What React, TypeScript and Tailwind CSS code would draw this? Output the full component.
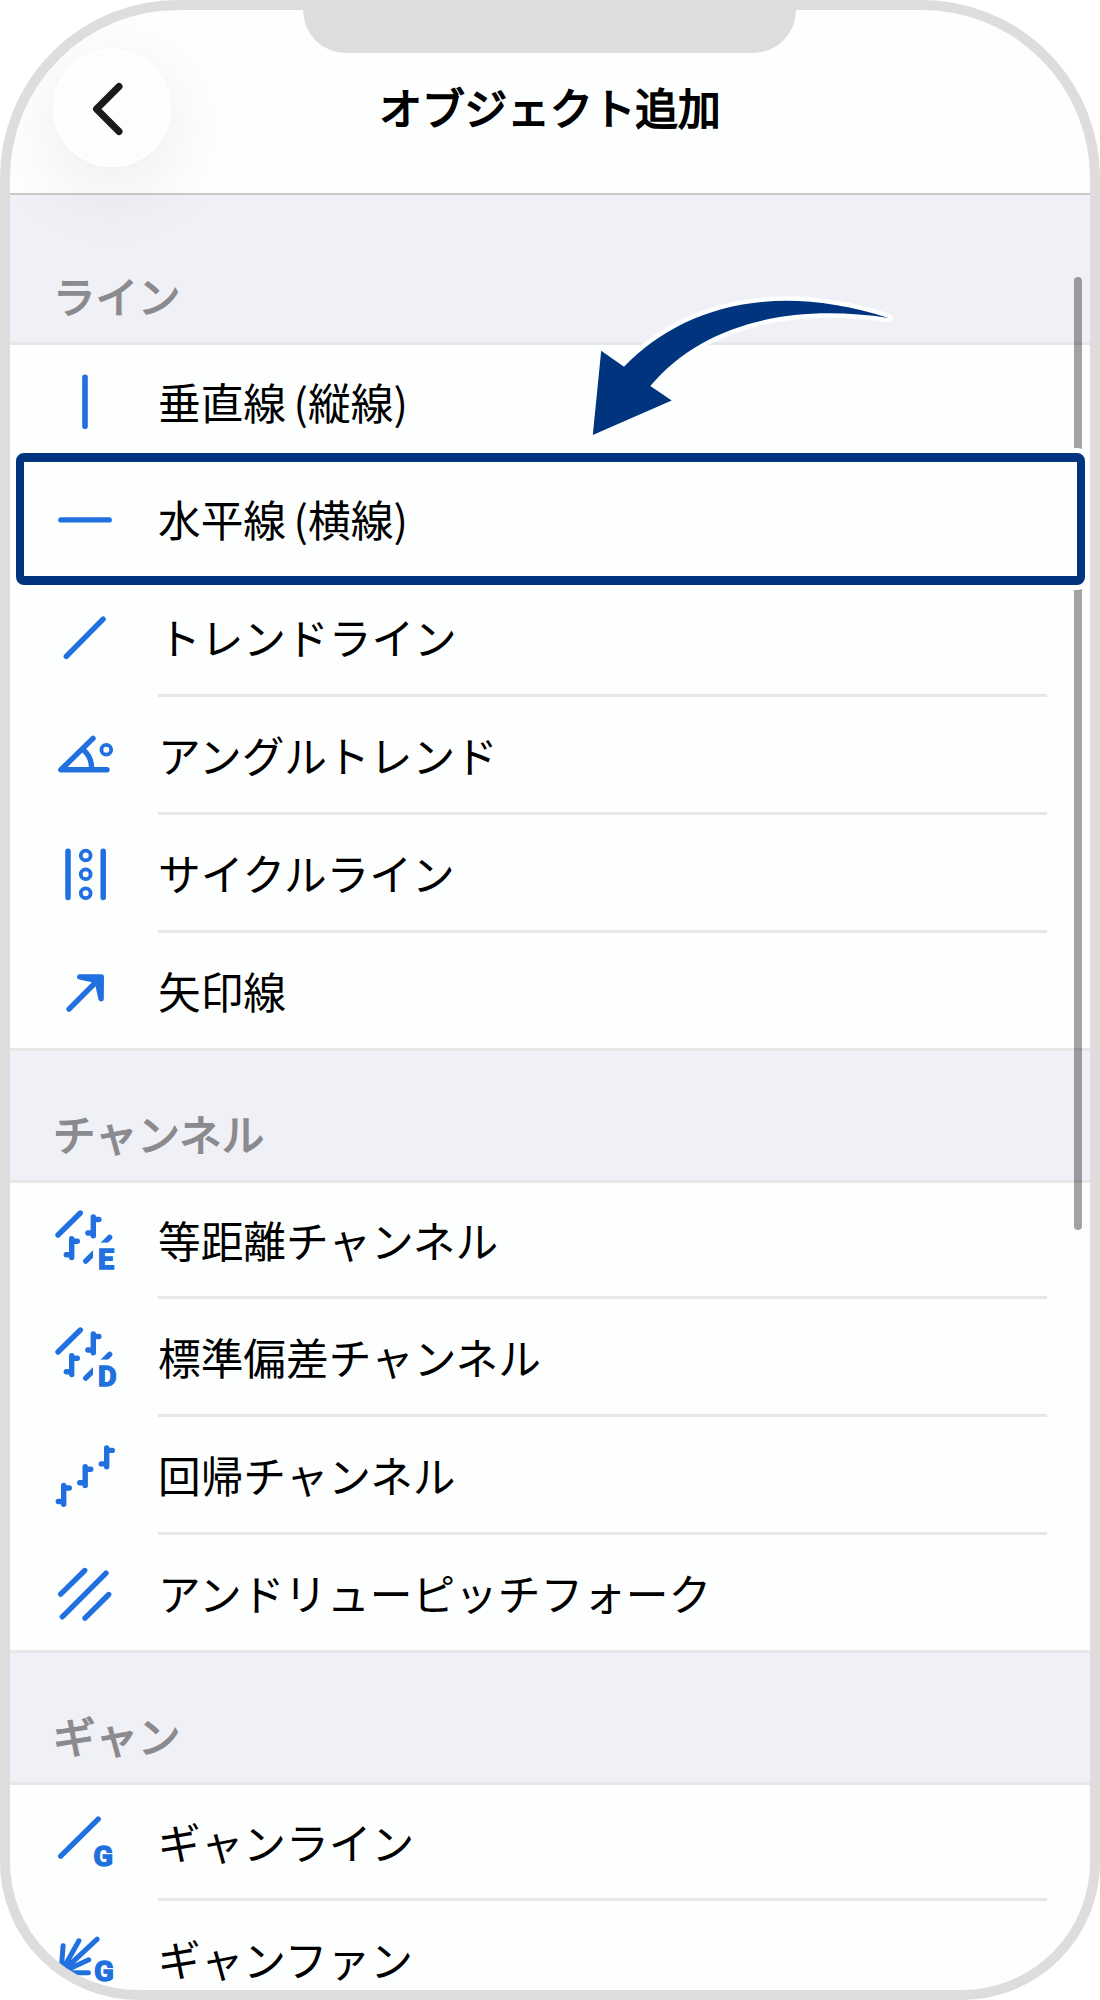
import type { ReactNode } from "react";

interface ObjectItem {
  label: string;
  icon: ReactNode;
  highlighted?: boolean;
}

interface ObjectGroup {
  title: string;
  items: ObjectItem[];
}

const Icon = ({ children }: { children: ReactNode }) => (
  <svg
    viewBox="0 0 66 66"
    className="h-[66px] w-[66px] shrink-0 overflow-visible"
    fill="none"
    stroke="#2070e0"
    strokeWidth={5.4}
    strokeLinecap="round"
    strokeLinejoin="round"
  >
    {children}
  </svg>
);

// Price bar with its open and close ticks
const Bar = ({ x, y }: { x: number; y: number }) => (
  <path d={`M${x} ${y}v18.8M${x} ${y + 2.5}h5.6M${x} ${y + 16}h-5.4`} />
);

const Letter = ({ x, y, children }: { x: number; y: number; children: string }) => (
  <text
    x={x}
    y={y}
    fill="#2070e0"
    strokeWidth={1.6}
    strokeLinejoin="miter"
    className="font-['Roboto',sans-serif] text-[28.5px] font-bold"
  >
    {children}
  </text>
);

const ChannelIcon = ({ letter }: { letter: string }) => (
  <Icon>
    <path d="M6 28L28.3 6" />
    <Bar x={19.7} y={31.7} />
    <Bar x={41.3} y={10} />
    <path d="M33.7 54.2L57.7 30.4" />
    <rect x="41" y="35.6" width="26" height="30" fill="#fdfefe" stroke="none" />
    <Letter x={46} y={62.1}>{letter}</Letter>
  </Icon>
);

const groups: ObjectGroup[] = [
  {
    title: "ライン",
    items: [
      {
        label: "垂直線 (縦線)",
        icon: <Icon><path d="M33 8.2V57.2" strokeWidth={5.6} /></Icon>,
      },
      {
        label: "水平線 (横線)",
        icon: <Icon><path d="M8.9 33.9H57.2" strokeWidth={5.4} /></Icon>,
        highlighted: true,
      },
      {
        label: "トレンドライン",
        icon: <Icon><path d="M14.3 52.4L51.1 15.2" /></Icon>,
      },
      {
        label: "アングルトレンド",
        icon: (
          <Icon>
            <path d="M41 16.4L8.9 47.8H55" />
            <path d="M31.5 28C37 32.5 39.8 39 39.5 47" />
            <circle cx="54.3" cy="27.8" r="4.9" strokeWidth={3.8} />
          </Icon>
        ),
      },
      {
        label: "サイクルライン",
        icon: (
          <Icon>
            <path d="M16 11.2V57.4M51.2 11.2V57.4" strokeWidth={5.5} />
            <circle cx="33.7" cy="15.5" r="4.9" strokeWidth={3.8} />
            <circle cx="33.7" cy="34.2" r="4.9" strokeWidth={3.8} />
            <circle cx="33.7" cy="53.2" r="4.9" strokeWidth={3.8} />
          </Icon>
        ),
      },
      {
        label: "矢印線",
        icon: (
          <Icon>
            <path d="M17 51.2L46 22" />
            <path d="M27.7 18.9H49.3L49.1 40.8L45 22.5Z" fill="#2070e0" />
          </Icon>
        ),
      },
    ],
  },
  {
    title: "チャンネル",
    items: [
      { label: "等距離チャンネル", icon: <ChannelIcon letter="E" /> },
      { label: "標準偏差チャンネル", icon: <ChannelIcon letter="D" /> },
      {
        label: "回帰チャンネル",
        icon: (
          <Icon>
            <Bar x={11.7} y={43.5} />
            <Bar x={33.2} y={24.7} />
            <Bar x={54.7} y={5.9} />
          </Icon>
        ),
      },
      {
        label: "アンドリューピッチフォーク",
        icon: (
          <Icon>
            <path d="M8.7 34.2L32.7 10.5M10.3 56.8L54 13.2M33 58.2L56.7 34.5" />
          </Icon>
        ),
      },
    ],
  },
  {
    title: "ギャン",
    items: [
      {
        label: "ギャンライン",
        icon: (
          <Icon>
            <path d="M8.7 47.2L46.2 10.2" />
            <Letter x={41.4} y={56.9}>G</Letter>
          </Icon>
        ),
      },
      {
        label: "ギャンファン",
        icon: (
          <Icon>
            <path
              d="M9 46.8L11.1 19.8M9 46.8L26.9 14.8M9 46.8L45.2 13.2M9 46.8L36.7 33.8M9 46.8H36.4"
              strokeWidth={5}
            />
            <Letter x={42.2} y={54.5}>G</Letter>
          </Icon>
        ),
      },
    ],
  },
];

const Row = ({ item }: { item: ObjectItem }) => (
  <li className="group relative flex h-[118px] shrink-0 pl-[42px] first:h-[116px]">
    {item.highlighted && (
      <div className="absolute -top-2 right-[5px] -bottom-1.5 left-1.5 z-10 rounded-lg border-8 border-y-9 border-[#00347e] bg-[#fdfefe] shadow-[0_0_0_5px_#fdfefe]" />
    )}
    <div className="relative z-20 flex items-center pb-[3px]">{item.icon}</div>
    <div className="ml-10 mr-[43px] flex flex-1 items-center border-b-3 border-[#e6e8e8] group-last:mr-0 group-last:border-transparent">
      <span className="relative z-20 text-[42.7px] leading-none whitespace-nowrap text-black [word-spacing:-2px]">
        {item.label}
      </span>
    </div>
  </li>
);

const Group = ({ group }: { group: ObjectGroup }) => (
  <section className="group/section shrink-0">
    <h2 className="flex h-[135px] items-end border-y-3 border-[#e6e8e8] bg-[#f0f1f6] pb-[23px] pl-[43px] text-[42.5px] leading-12 font-normal text-[#8a8a8f] [-webkit-text-stroke:1.5px_#8a8a8f] group-first/section:h-[150px] group-first/section:border-t-0">
      {group.title}
    </h2>
    {/* the closing line of a group is the top border of the next title */}
    <ul className="-mb-[3px] flex flex-col">
      {group.items.map((item) => (
        <Row key={item.label} item={item} />
      ))}
    </ul>
  </section>
);

const PointerArrow = () => (
  <svg
    viewBox="580 290 320 155"
    className="absolute top-[280px] left-[570px] z-30 h-[155px] w-[320px] overflow-visible"
    fill="#00347e"
    stroke="#fdfefe"
    strokeWidth={9}
    strokeLinejoin="round"
    style={{ paintOrder: "stroke" }}
  >
    <path d="M592.8 435L601.2 350.7L624 366.7C680 309 770 280 888.5 318C790 303 702 324 650.3 386L671.7 400.5Z" />
  </svg>
);

export default function App() {
  return (
    <div className="h-[2000px] w-[1100px] bg-white font-['Noto_Sans_CJK_JP',sans-serif]">
      <div className="relative flex h-full flex-col overflow-hidden rounded-t-[178px] rounded-b-[138px] border-10 border-[#dddddd] bg-[#fdfefe]">
        <div className="absolute top-0 left-[293px] z-30 h-[43px] w-[493px] rounded-b-[45px] bg-[#dddddd]" />

        <header className="relative z-10 grid h-[185px] shrink-0 grid-cols-[1fr_auto_1fr] items-center border-b-2 border-[#c9caca] pt-3">
          <button className="ml-[43px] flex h-[118px] w-[118px] items-center justify-center rounded-full border-2 border-white bg-[#fdfdfd] shadow-[0_20px_80px_rgba(0,20,10,0.08)]">
            <svg viewBox="0 0 40 60" className="mr-2 h-[60px] w-10" fill="none" stroke="#1a1a1a" strokeWidth={7} strokeLinecap="round" strokeLinejoin="round">
              <path d="M31 8.5L8.5 31L31 53.5" />
            </svg>
          </button>
          <h1 className="pb-0.5 text-[42.7px] leading-none font-normal text-black [-webkit-text-stroke:1.7px_#000]">オブジェクト追加</h1>
        </header>

        <main className="flex min-h-0 flex-1 flex-col">
          {groups.map((group) => (
            <Group key={group.title} group={group} />
          ))}
        </main>

        <div className="absolute top-[267px] right-2 h-[953px] w-2 rounded-full bg-black/36" />
        <PointerArrow />
      </div>
    </div>
  );
}
